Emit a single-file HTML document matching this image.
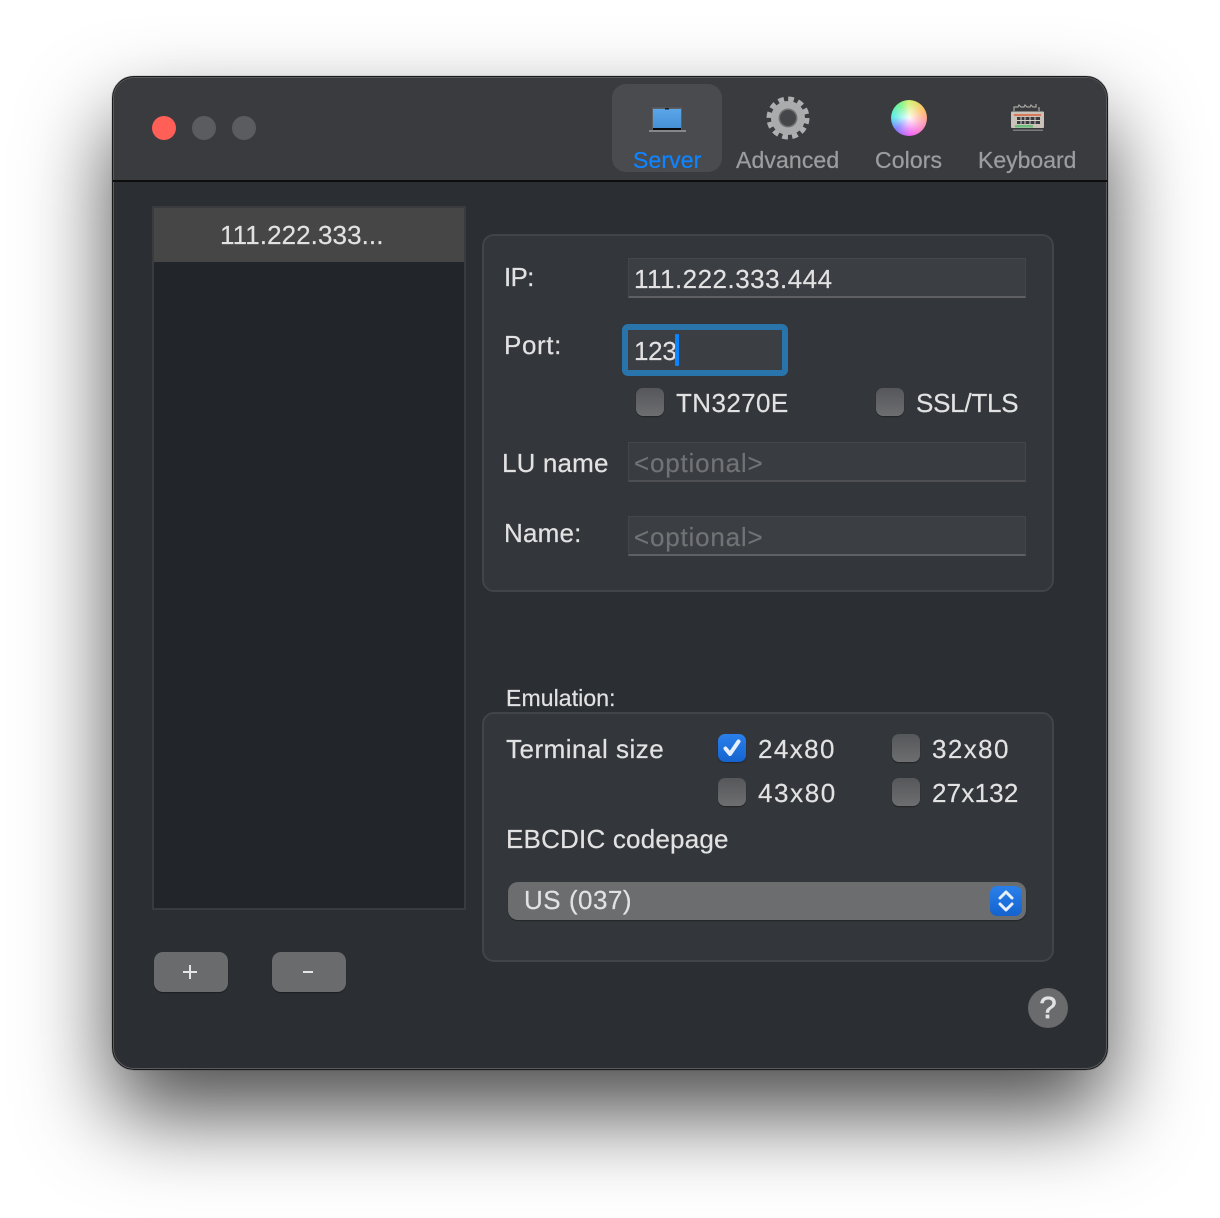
<!DOCTYPE html>
<html><head><meta charset="utf-8"><style>
html,body{margin:0;padding:0;background:#fff}
#p{position:relative;width:1220px;height:1218px;overflow:hidden;background:#fff;font-family:"Liberation Sans",sans-serif}
#p div,#p span,#p svg{position:absolute}
.t{color:#e2e2e3;font-size:26px;line-height:32px;white-space:nowrap;-webkit-text-stroke:.2px currentColor}
.tb{color:#9c9d9f;font-size:23px;line-height:28px;white-space:nowrap;top:146px;-webkit-text-stroke:.25px currentColor;letter-spacing:.12px}
.box{box-sizing:border-box;background:#33363a;border:2px solid #414448;border-radius:12px}
.inp{box-sizing:border-box;left:628px;width:398px;height:40px;background:#3b3e42;border:1px solid #43464a;border-bottom:2px solid #5e6063}
.cb{box-sizing:border-box;width:28px;height:28px;border-radius:7px;background:linear-gradient(#55575a,#6d6e70);box-shadow:0 1px 1px rgba(0,0,0,.35)}
.btn{width:74px;height:40px;border-radius:9px;background:#6a6b6d;box-shadow:0 1px 1px rgba(0,0,0,.35)}
</style></head><body><div id="p">
<div style="left:112px;top:76px;width:996px;height:994px;border-radius:22px;box-shadow:0 44px 88px rgba(0,0,0,.7),0 0 1px rgba(0,0,0,.6)"></div>
<div style="box-sizing:border-box;left:112px;top:76px;width:996px;height:994px;border-radius:22px;background:#2b2e32;overflow:hidden;border:1px solid #1a1a1b;box-shadow:inset 0 0 0 1px #5a5b5f"></div>
<div style="left:114px;top:78px;width:992px;height:103px;border-radius:20px 20px 0 0;background:#3a3b3f"></div>
<div style="left:113px;top:180px;width:994px;height:2px;background:#0d0d0e"></div>

<div style="left:152px;top:116px;width:24px;height:24px;border-radius:50%;background:#ff5f57"></div>
<div style="left:192px;top:116px;width:24px;height:24px;border-radius:50%;background:#5a5c60"></div>
<div style="left:232px;top:116px;width:24px;height:24px;border-radius:50%;background:#5a5c60"></div>

<div style="left:612px;top:84px;width:110px;height:88px;border-radius:14px;background:#4a4b4f"></div>
<svg style="left:648px;top:104px" width="40" height="30" viewBox="0 0 40 30">
<defs><linearGradient id="s" x1="0" y1="0" x2="0" y2="1"><stop offset="0" stop-color="#5aa6e8"/><stop offset="1" stop-color="#4690d6"/></linearGradient></defs>
<rect x="4" y="3.5" width="30" height="22" fill="#5d5f63"/>
<rect x="5" y="5" width="28" height="19" fill="url(#s)"/>
<rect x="17" y="4" width="4" height="1.5" fill="#1a1d22"/>
<rect x="5" y="24" width="28" height="2" fill="#08090b"/>
<rect x="1" y="26" width="37" height="2" fill="#85878b"/>
</svg>
<span class="tb" style="left:633px;color:#0f84ff">Server</span>

<svg style="left:766px;top:96px" width="44" height="44" viewBox="0 0 44 44">
<circle cx="22" cy="22" r="18.5" fill="none" stroke="#adafb1" stroke-width="6" stroke-dasharray="5.6 4.09"/>
<circle cx="22" cy="22" r="13" fill="none" stroke="#a9abad" stroke-width="8"/>
<circle cx="22" cy="22" r="9.5" fill="#6f7173"/>
<circle cx="22" cy="22" r="8" fill="#45464a"/>
</svg>
<span class="tb" style="left:736px">Advanced</span>

<div style="left:891px;top:100px;width:36px;height:36px;border-radius:50%;background:radial-gradient(circle,rgba(255,255,255,.95) 0,rgba(255,255,255,.4) 45%,rgba(255,255,255,0) 88%),conic-gradient(#c8ee50,#ffb040 60deg,#ff80a0 110deg,#f040f0 175deg,#6060ff 230deg,#30e8e0 275deg,#50f070 325deg,#c8ee50)"></div>
<span class="tb" style="left:875px">Colors</span>

<svg style="left:1010px;top:103px" width="36" height="28" viewBox="0 0 36 28">
<path d="M4 8V4h4l1-2 2 2h3l1-2 2 2h3l1-2 2 2h3V1M29 4v4" fill="none" stroke="#a9a7a3" stroke-width="1.2"/>
<rect x="1" y="8.5" width="33" height="16.5" rx="1" fill="#c9c3ba"/>
<rect x="4" y="11" width="27" height="2" fill="#d8765a"/>
<rect x="7" y="14" width="23" height="7" fill="#3a3b3c"/>
<path d="M11 14v7M15 14v7M20 14v7M25 14v7M7 17.5h23" stroke="#d5d2cc" stroke-width="1"/>
<rect x="5" y="22" width="18" height="2.5" fill="#6bbd7c"/>
<rect x="3" y="26.5" width="30" height="1.5" fill="#7c7c7c"/>
</svg>
<span class="tb" style="left:978px;letter-spacing:0">Keyboard</span>

<div style="box-sizing:border-box;left:152px;top:206px;width:314px;height:704px;background:#222529;border:2px solid #393b3e"></div>
<div style="left:154px;top:208px;width:310px;height:54px;background:#464646"></div>
<span class="t" style="left:220px;top:219px;letter-spacing:.08px">111.222.333...</span>

<div class="btn" style="left:154px;top:952px"></div>
<div style="left:183px;top:970.8px;width:14px;height:2.4px;background:#e6e6e6"></div>
<div style="left:188.8px;top:965px;width:2.4px;height:14px;background:#e6e6e6"></div>
<div class="btn" style="left:272px;top:952px"></div>
<div style="left:303px;top:970.8px;width:10px;height:2.4px;background:#e6e6e6"></div>

<div class="box" style="left:482px;top:234px;width:572px;height:358px"></div>
<span class="t" style="left:504px;top:261px;letter-spacing:-.7px">IP:</span>
<div class="inp" style="top:258px"></div>
<span class="t" style="left:634px;top:263px;letter-spacing:.48px">111.222.333.444</span>
<span class="t" style="left:504px;top:329px;letter-spacing:.6px">Port:</span>
<div style="box-sizing:border-box;left:622px;top:324px;width:166px;height:52px;border-radius:6px;border:6px solid #2874ab;background:#3b3e42"></div>
<span class="t" style="left:634px;top:335px;letter-spacing:-.3px">123</span>
<div style="left:675px;top:334px;width:4px;height:32px;background:#0a84ff;border-radius:1px"></div>
<div class="cb" style="left:636px;top:388px"></div>
<span class="t" style="left:676px;top:387px;letter-spacing:.4px">TN3270E</span>
<div class="cb" style="left:876px;top:388px"></div>
<span class="t" style="left:916px;top:387px;letter-spacing:-.25px">SSL/TLS</span>
<span class="t" style="left:502px;top:447px;letter-spacing:.15px">LU name</span>
<div class="inp" style="top:442px;background:#393c40;border-bottom-color:#4d4f52"></div>
<span class="t" style="left:634px;top:447px;color:#707274;letter-spacing:.8px">&lt;optional&gt;</span>
<span class="t" style="left:504px;top:517px;letter-spacing:.2px">Name:</span>
<div class="inp" style="top:516px"></div>
<span class="t" style="left:634px;top:521px;color:#707274;letter-spacing:.8px">&lt;optional&gt;</span>

<span class="t" style="left:506px;top:684px;font-size:23px;line-height:28px;letter-spacing:.1px">Emulation:</span>
<div class="box" style="left:482px;top:712px;width:572px;height:250px"></div>
<span class="t" style="left:506px;top:733px;letter-spacing:.5px">Terminal size</span>
<div class="cb" style="left:718px;top:734px;background:linear-gradient(#2a80ea,#1463cf)"></div>
<svg style="left:718px;top:734px" width="28" height="28" viewBox="0 0 28 28"><path d="M7.5 14.5l4.5 5.5L20.5 7.5" fill="none" stroke="#e6effa" stroke-width="4" stroke-linecap="round" stroke-linejoin="round"/></svg>
<span class="t" style="left:758px;top:733px;letter-spacing:1.4px">24x80</span>
<div class="cb" style="left:892px;top:734px"></div>
<span class="t" style="left:932px;top:733px;letter-spacing:1.4px">32x80</span>
<div class="cb" style="left:718px;top:778px"></div>
<span class="t" style="left:758px;top:777px;letter-spacing:1.6px">43x80</span>
<div class="cb" style="left:892px;top:778px"></div>
<span class="t" style="left:932px;top:777px;letter-spacing:.2px">27x132</span>
<span class="t" style="left:506px;top:823px;letter-spacing:.2px">EBCDIC codepage</span>
<div style="left:508px;top:882px;width:518px;height:38px;border-radius:10px;background:#6c6d6f;box-shadow:0 1px 1px rgba(0,0,0,.35)"></div>
<span class="t" style="left:524px;top:884px;letter-spacing:.5px">US (037)</span>
<div style="left:990px;top:886px;width:32px;height:30px;border-radius:7px;background:linear-gradient(#2a80ea,#1463cf)"></div>
<svg style="left:990px;top:886px" width="32" height="30" viewBox="0 0 32 30"><path d="M10 12l6-6 6 6M10 18l6 6 6-6" fill="none" stroke="#e6effa" stroke-width="3" stroke-linecap="round" stroke-linejoin="round"/></svg>

<div style="left:1028px;top:988px;width:40px;height:40px;border-radius:50%;background:#6a6b6d"></div>
<span class="t" style="left:1028px;top:992px;width:40px;text-align:center;font-size:31px;-webkit-text-stroke:.7px #e2e2e3">?</span>
</div></body></html>
